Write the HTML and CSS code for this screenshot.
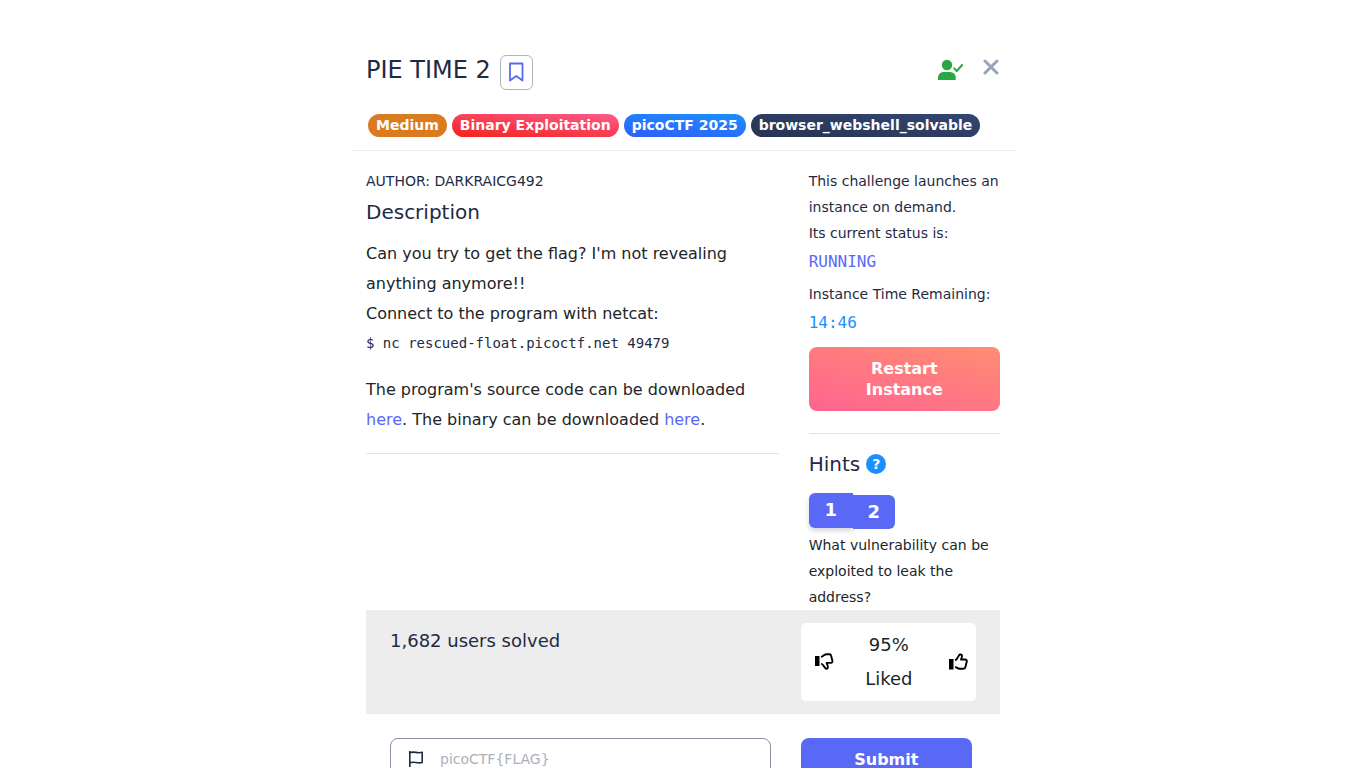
FILE: index.html
```html
<!DOCTYPE html>
<html lang="en">
<head>
<meta charset="utf-8">
<meta name="viewport" content="width=device-width, initial-scale=1">
<title>PIE TIME 2</title>
<link rel="stylesheet" href="styles.css">
</head>
<body>
<main class="modal">
  <header class="modal-header">
    <div class="title-row">
      <h1 class="title">PIE TIME 2</h1>
      <button class="bookmark" type="button" aria-label="Bookmark">
        <svg width="20" height="20" viewBox="0 0 20 20" fill="none" stroke="#5969f6" stroke-width="1.800" stroke-linejoin="round"><path d="M4 1.500h12.500v17l-6.250-4.500L4 18.500z"/></svg>
      </button>
      <svg class="solved-icon" width="26" height="22" viewBox="0 0 26 22" role="img" aria-label="Solved"><circle cx="9" cy="6" r="5.200" fill="#28a745"/><path d="M0 21v-2.500C0 15.200 2.700 13 6 13h5.500c3.500 0 6.200 2.200 6.200 5.500V21z" fill="#28a745"/><path d="m16.200 9.300 2.500 2.700 5.500-6" fill="none" stroke="#28a745" stroke-width="1.900" stroke-linecap="round" stroke-linejoin="round"/></svg>
      <button class="close" type="button" aria-label="Close">
        <svg width="16" height="16" viewBox="0 0 16 16" fill="none" stroke="#98a3bc" stroke-width="3" stroke-linecap="round"><path d="m2 2 12 12M14 2 2 14"/></svg>
      </button>
    </div>
    <div class="badges">
      <span class="badge badge-medium">Medium</span>
      <span class="badge badge-category">Binary Exploitation</span>
      <span class="badge badge-event">picoCTF 2025</span>
      <span class="badge badge-tag">browser_webshell_solvable</span>
    </div>
  </header>

  <div class="modal-body">
    <div class="columns">
      <section class="details">
        <p class="note">AUTHOR: DARKRAICG492</p>
        <h2 class="heading">Description</h2>
        <div class="prose">
          <p>Can you try to get the flag? I'm not revealing anything anymore!!<br>Connect to the program with netcat:</p>
          <code class="command">$ nc rescued-float.picoctf.net 49479</code>
          <p>The program's source code can be downloaded <a href="#">here</a>. The binary can be downloaded <a href="#">here</a>.</p>
        </div>
        <hr class="rule">
      </section>

      <aside class="instance">
        <p class="note">This challenge launches an instance on demand.<br>Its current status is:</p>
        <p class="status">RUNNING</p>
        <p class="note">Instance Time Remaining:</p>
        <p class="status timer">14:46</p>
        <button class="button restart" type="button">Restart<br>Instance</button>
        <hr class="rule">
        <div class="hints-title">
          <h2 class="heading">Hints</h2>
          <button class="help" type="button" aria-label="About hints">?</button>
        </div>
        <div class="hint-tabs">
          <button class="hint hint-active" type="button">1</button>
          <button class="hint" type="button">2</button>
        </div>
        <p class="note hint-text">What vulnerability can be exploited to leak the address?</p>
      </aside>
    </div>

    <section class="stats">
      <p class="solves">1,682 users solved</p>
      <div class="rating">
        <button class="vote" type="button" aria-label="Dislike">
          <svg width="20" height="18" viewBox="0 0 20 18"><path d="M1 3h4.500v10H1z"/><path d="M7.200 4.200 9.800 2.300C11 1.500 12 1.200 13 1.200h2.500c1 0 1.500.7 1.600 1.500l1.300 5c.3 1.300-.3 2.200-1.600 2.200h-4.200c.8 1.800 1.300 3.200 1.300 4.300 0 1.500-1.600 2.100-2.600 1-1.200-1.300-1.500-3.300-4.100-4.700" fill="none" stroke="#000" stroke-width="1.900" stroke-linejoin="round"/></svg>
        </button>
        <p class="rating-text">95% Liked</p>
        <button class="vote" type="button" aria-label="Like">
          <svg width="20" height="18" viewBox="0 0 20 18"><path d="M1 6h4.500v10.500H1z"/><path d="M7.200 7.500c2.300-1.200 2.800-3.700 3.800-5.300.8-1.300 3-.9 3 .9 0 1-.5 2.200-1 3.400h4c1.500 0 2 1 1.700 2.200l-1.200 5c-.3 1.300-1 2-2 2H12c-1.200 0-2.200-.3-3-.8L7.200 13.800" fill="none" stroke="#000" stroke-width="1.900" stroke-linejoin="round"/></svg>
        </button>
      </div>
    </section>

    <form class="submit-row">
      <label class="flag-field">
        <svg width="16" height="18" viewBox="0 0 16 18" fill="none" stroke="#1f2a44" stroke-width="1.600" stroke-linejoin="round"><path d="M1.800 1v16M1.800 2.700c4.500-2 7 1.200 12.400-.4v10.200c-5 1.500-8-1.500-12.400.4"/></svg>
        <input class="flag-input" type="text" placeholder="picoCTF{FLAG}" aria-label="Flag">
      </label>
      <button class="button submit" type="submit">Submit</button>
    </form>
  </div>
</main>
</body>
</html>
```
FILE: styles.css
```css
* {
  box-sizing: border-box;
}

body {
  margin: 0;
  background: #fff;
  color: #212529;
  font-family: "DejaVu Sans", sans-serif;
  font-size: 16px;
  line-height: 30px;
}

h1,
h2,
p {
  margin: 0;
  font-weight: 400;
}

button {
  margin: 0;
  padding: 0;
  border: 0;
  background: none;
  font-family: inherit;
  cursor: pointer;
}

svg {
  display: block;
}

a {
  color: #5969f6;
  text-decoration: none;
}

.modal {
  max-width: 664px;
  margin: 0 auto;
  padding-top: 54px;
}

.modal-header {
  padding: 0 15px 13px;
  border-bottom: 1px solid #e9ecef;
}

.title-row {
  display: flex;
  align-items: flex-start;
}

.title {
  color: #1f2a44;
  font-size: 24px;
  line-height: 32px;
}

.bookmark {
  display: grid;
  place-items: center;
  width: 33px;
  height: 35px;
  margin: 1px auto 0 9px;
  padding-bottom: 2px;
  border: 1px solid #adb5bd;
  border-radius: 6px;
}

.solved-icon {
  margin-top: 5px;
}

.close {
  margin: 5px 1px 0 19px;
}

.badges {
  display: flex;
  flex-wrap: wrap;
  gap: 5px;
  padding: 24px 2px 0;
}

.badge {
  padding: 0 8px;
  border-radius: 12px;
  color: #fff;
  font-size: 14px;
  font-weight: 700;
  line-height: 23px;
}

.badge-medium {
  background: #da7b20;
}

.badge-category {
  background: linear-gradient(6deg, #f5221b, #fb5c8d);
}

.badge-event {
  background: linear-gradient(6deg, #305ef8, #1b8fff);
}

.badge-tag {
  background: linear-gradient(6deg, #27334f, #344675);
}

.modal-body {
  padding: 17px 15px 24px;
}

.columns {
  display: grid;
  grid-template-columns: repeat(3, minmax(0, 1fr));
  gap: 30px;
}

.details {
  grid-column: span 2;
}

.note {
  color: #1f2a44;
  font-size: 14px;
  line-height: 26px;
}

.heading {
  color: #1f2a44;
  font-size: 20px;
  line-height: 24px;
}

.details .heading {
  margin: 6px 0 15px;
}

.command {
  display: block;
  margin-bottom: 18px;
  color: #1f2a44;
  font-family: "DejaVu Sans Mono", monospace;
  font-size: 14px;
  line-height: 28px;
}

.rule {
  margin: 18px 0 0;
  border: 0;
  border-top: 1px solid #e3e4e6;
}

.status {
  padding-top: 1px;
  margin-bottom: 4px;
  color: #5969f6;
  font-family: "DejaVu Sans Mono", monospace;
}

.timer {
  margin-bottom: 9px;
  color: #1b8fff;
}

.button {
  border-radius: 8px;
  color: #fff;
  font-size: 16px;
  font-weight: 700;
  line-height: 21px;
}

.restart {
  display: block;
  width: 100%;
  padding: 11px 0;
  background: linear-gradient(15deg, #ff6491, #ff8d72);
}

.instance .rule {
  margin-top: 22px;
}

.hints-title {
  display: flex;
  align-items: center;
  gap: 6px;
  margin: 18px 0 17px;
}

.help {
  width: 20px;
  height: 20px;
  border-radius: 50%;
  background: #1b8fff;
  color: #fff;
  font-size: 14px;
  font-weight: 700;
  line-height: 20px;
}

.hint-tabs {
  display: flex;
  align-items: flex-end;
}

.hint {
  width: 42px;
  height: 34px;
  padding-bottom: 2px;
  border-radius: 0 6px 6px 0;
  background: #5969f6;
  color: #fff;
  font-size: 18px;
  font-weight: 700;
}

.hint-active {
  width: 44px;
  height: 35px;
  margin-bottom: 1px;
  border-radius: 6px 0 0 6px;
  box-shadow: 0 3px 5px rgba(50, 50, 93, 0.2);
}

.hint-text {
  margin-top: 3px;
  color: #212529;
}

.stats,
.submit-row {
  display: grid;
  grid-template-columns: repeat(3, minmax(0, 1fr));
  gap: 30px;
  padding: 13px 24px;
}

.stats {
  background: #ededed;
  font-size: 18px;
}

.solves {
  grid-column: span 2;
  padding-top: 3px;
  color: #1f2a44;
}

.rating {
  display: flex;
  align-items: center;
  justify-content: space-between;
  padding: 5px 8px 5px 13px;
  border-radius: 5px;
  background: #fff;
  line-height: 34px;
}

.rating-text {
  width: 64px;
  margin-right: 4px;
  text-align: center;
}

.submit-row {
  padding-top: 24px;
}

.flag-field {
  display: flex;
  grid-column: span 2;
  align-items: center;
  gap: 16px;
  height: 42px;
  padding: 0 17px;
  border: 1px solid #8e8fa3;
  border-radius: 8px;
}

.flag-input {
  flex: 1;
  min-width: 0;
  padding: 0;
  border: 0;
  outline: 0;
  background: none;
  color: #1f2a44;
  font-family: inherit;
  font-size: 14px;
}

.flag-input::placeholder {
  color: #adb0bb;
}

.submit {
  height: 43px;
  margin-right: 4px;
  background: #5969f6;
}
```
